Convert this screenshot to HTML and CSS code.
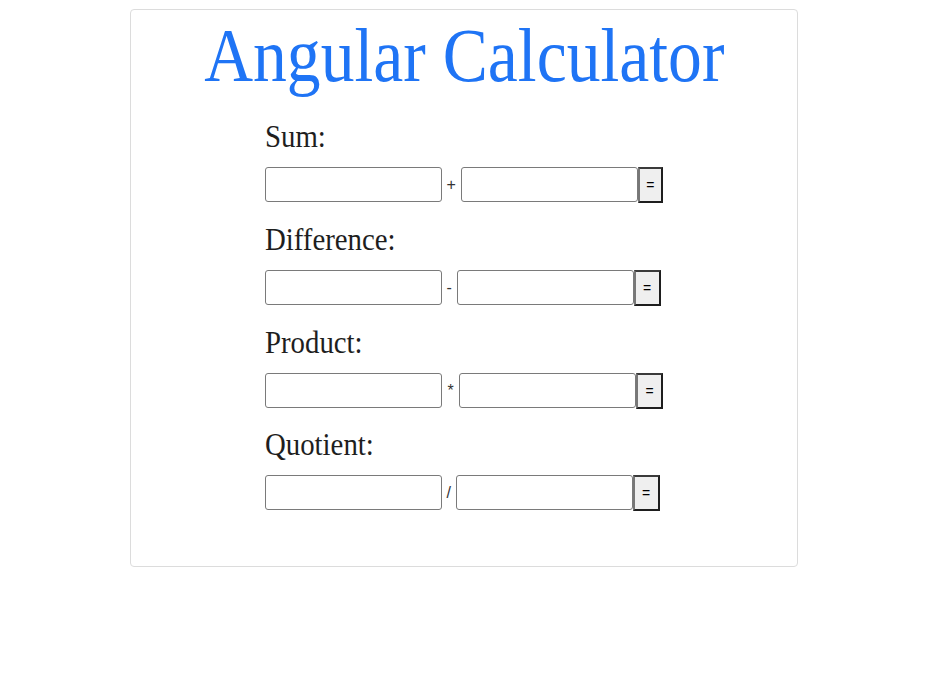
FILE: index.html
```html
<!DOCTYPE html>
<html lang="en">
<head>
<meta charset="utf-8">
<title>Angular Calculator</title>
<link rel="stylesheet" href="styles.css">
</head>
<body>
<div class="card">
  <h1 class="title"><span class="title-text">Angular Calculator</span></h1>
  <div class="form">
    <div class="group">
      <div class="label"><span class="label-text">Sum:</span></div>
      <div class="row">
        <input class="num" type="text"><span class="op">+</span><input class="num" type="text"><button class="eq">=</button>
      </div>
    </div>
    <div class="group">
      <div class="label"><span class="label-text">Difference:</span></div>
      <div class="row">
        <input class="num" type="text"><span class="op">-</span><input class="num" type="text"><button class="eq">=</button>
      </div>
    </div>
    <div class="group">
      <div class="label"><span class="label-text">Product:</span></div>
      <div class="row">
        <input class="num" type="text"><span class="op op-wide">*</span><input class="num" type="text"><button class="eq">=</button>
      </div>
    </div>
    <div class="group group-last">
      <div class="label"><span class="label-text">Quotient:</span></div>
      <div class="row">
        <input class="num" type="text"><span class="op">/</span><input class="num" type="text"><button class="eq">=</button>
      </div>
    </div>
  </div>
</div>
</body>
</html>
```
FILE: styles.css
```css
html, body {
  margin: 0;
  padding: 0;
  background: #ffffff;
}

body {
  padding-top: 9px;
  font-family: "Liberation Serif", "Times New Roman", serif;
  color: #222222;
}

.card {
  box-sizing: border-box;
  width: 668px;
  height: 558px;
  margin-left: 130px;
  border: 1px solid #dcdcdc;
  border-radius: 4px;
  background: #ffffff;
}

.title {
  margin: 0;
  padding-top: 2px;
  text-align: center;
  font-weight: normal;
  font-size: 76px;
  line-height: 87px;
  color: #1f74f5;
}

.title-text {
  display: inline-block;
  transform: scaleX(0.89);
  transform-origin: center;
  white-space: nowrap;
}

.form {
  width: 398px;
  margin: 19px auto 0;
  display: flex;
  flex-direction: column;
  gap: 19px;
}

.group {
  display: flex;
  flex-direction: column;
  gap: 13px;
}

.group-last {
  margin-top: -1px;
}

.label {
  font-size: 32px;
  line-height: 36px;
  height: 36px;
  color: #1e1e1e;
  white-space: nowrap;
}

.label-text {
  display: inline-block;
  transform: scaleX(0.9);
  transform-origin: left center;
}

.row {
  display: flex;
  align-items: center;
  height: 35px;
}

.num {
  box-sizing: border-box;
  width: 177px;
  height: 35px;
  margin: 0;
  padding: 1px 4px;
  border: 1px solid #7a7a7a;
  border-radius: 3px;
  background: #ffffff;
  font-family: "Liberation Sans", Arial, sans-serif;
  font-size: 14px;
}

.op {
  margin: 0 4.6px;
  font-family: "Liberation Sans", Arial, sans-serif;
  font-size: 16px;
  line-height: 20px;
  color: #333333;
}

.op-wide {
  margin: 0 5.5px;
}

.eq {
  box-sizing: border-box;
  width: 27px;
  height: 36px;
  margin: 0;
  padding: 0;
  background: #efefef;
  border-style: solid;
  border-width: 2px;
  border-color: #3a3a3a #1e1e1e #1e1e1e #777777;
  border-radius: 0;
  font-family: "Liberation Sans", Arial, sans-serif;
  font-size: 14px;
  color: #000000;
}
```
